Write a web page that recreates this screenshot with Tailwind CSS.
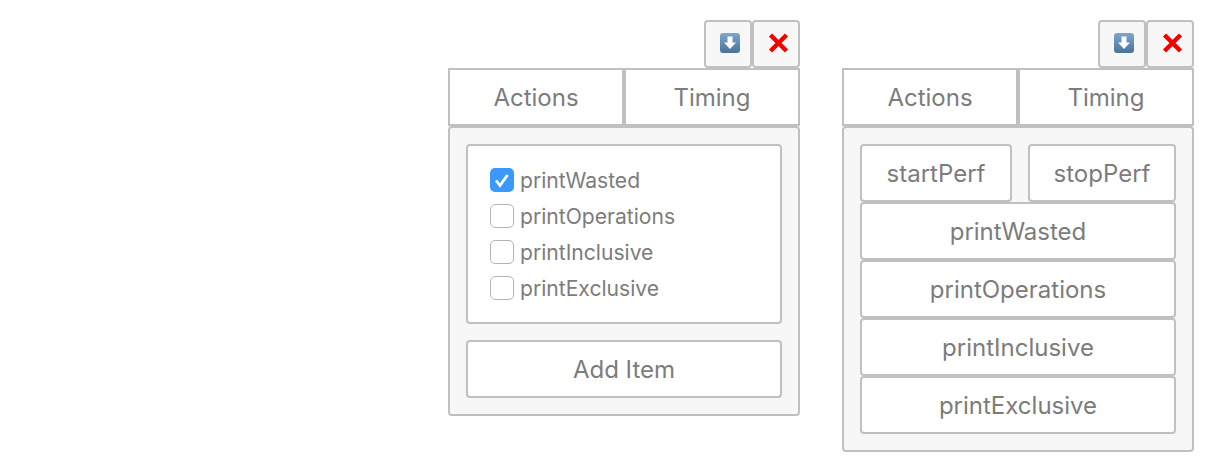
<!DOCTYPE html>
<html lang="en">
<head>
  <meta charset="UTF-8" />
  <title>Perf Panels</title>
  <script src="https://cdn.jsdelivr.net/npm/@tailwindcss/browser@4"></script>
</head>
<body class="bg-white font-['Inter',sans-serif] text-[#7c7c7c]">
  <div class="flex justify-end items-start gap-[42px] pt-5 pr-[22px]">

    <!-- actions panel -->
    <section class="w-[352px]">
      <div class="flex justify-end">
        <button class="w-12 h-12 pl-1 pb-[2px] flex items-center justify-center bg-[#f7f7f7] border-2 border-[#c0c0c0] rounded-[4px]">
          <svg width="20" height="20" viewBox="0 0 20 20"><defs><linearGradient id="a1" x1="0" y1="0" x2="0" y2="1"><stop offset="0" stop-color="#7fa6cb"/><stop offset="1" stop-color="#4a7299"/></linearGradient></defs><rect width="20" height="20" rx="3" fill="url(#a1)"/><path d="M7.500 3.500h5v6h3.500L10 16 4 9.500h3.500z" fill="#fff"/></svg>
        </button>
        <button class="w-12 h-12 pl-1 pb-[2px] flex items-center justify-center bg-[#f7f7f7] border-2 border-[#c0c0c0] rounded-[4px]">
          <svg width="21" height="20" viewBox="0 0 21 20"><path d="M2.500 2l16 16M18.500 2l-16 16" stroke="#f40000" stroke-width="4.500" fill="none"/></svg>
        </button>
      </div>
      <div class="flex">
        <button class="w-44 h-[58px] pt-[2px] bg-white border-2 border-[#c0c0c0] text-2xl">Actions</button>
        <button class="w-44 h-[58px] pt-[2px] bg-white border-2 border-[#c0c0c0] text-2xl">Timing</button>
      </div>
      <div class="bg-[#f7f7f7] border-2 border-[#c0c0c0] rounded-[4px] p-4">
        <div class="bg-white border-2 border-[#c0c0c0] rounded-[4px] py-4 px-[22px] mb-4 text-[21.100px]">
          <label class="flex items-center h-9 gap-[6px]">
            <span class="w-6 h-6 bg-[#3b99fc] rounded-[5px]">
              <svg width="24" height="24" viewBox="0 0 24 24"><path d="M6 12.500l4 5L17.500 7" stroke="#fff" stroke-width="2.800" fill="none"/></svg>
            </span>
            <span class="pt-[2px]">printWasted</span>
          </label>
          <label class="flex items-center h-9 gap-[6px]"><span class="w-6 h-6 bg-white border border-[#b4b4b4] rounded-[5px]"></span><span class="pt-[2px]">printOperations</span></label>
          <label class="flex items-center h-9 gap-[6px]"><span class="w-6 h-6 bg-white border border-[#b4b4b4] rounded-[5px]"></span><span class="pt-[2px]">printInclusive</span></label>
          <label class="flex items-center h-9 gap-[6px]"><span class="w-6 h-6 bg-white border border-[#b4b4b4] rounded-[5px]"></span><span class="pt-[2px]">printExclusive</span></label>
        </div>
        <button class="w-full h-[58px] pt-[2px] bg-white border-2 border-[#c0c0c0] rounded-[4px] text-2xl">Add Item</button>
      </div>
    </section>

    <!-- timing panel -->
    <section class="w-[352px]">
      <div class="flex justify-end">
        <button class="w-12 h-12 pl-1 pb-[2px] flex items-center justify-center bg-[#f7f7f7] border-2 border-[#c0c0c0] rounded-[4px]">
          <svg width="20" height="20" viewBox="0 0 20 20"><defs><linearGradient id="a2" x1="0" y1="0" x2="0" y2="1"><stop offset="0" stop-color="#7fa6cb"/><stop offset="1" stop-color="#4a7299"/></linearGradient></defs><rect width="20" height="20" rx="3" fill="url(#a2)"/><path d="M7.500 3.500h5v6h3.500L10 16 4 9.500h3.500z" fill="#fff"/></svg>
        </button>
        <button class="w-12 h-12 pl-1 pb-[2px] flex items-center justify-center bg-[#f7f7f7] border-2 border-[#c0c0c0] rounded-[4px]">
          <svg width="21" height="20" viewBox="0 0 21 20"><path d="M2.500 2l16 16M18.500 2l-16 16" stroke="#f40000" stroke-width="4.500" fill="none"/></svg>
        </button>
      </div>
      <div class="flex">
        <button class="w-44 h-[58px] pt-[2px] bg-white border-2 border-[#c0c0c0] text-2xl">Actions</button>
        <button class="w-44 h-[58px] pt-[2px] bg-white border-2 border-[#c0c0c0] text-2xl">Timing</button>
      </div>
      <div class="bg-[#f7f7f7] border-2 border-[#c0c0c0] rounded-[4px] p-4 text-2xl">
        <div class="flex gap-4">
          <button class="w-[152px] h-[58px] pt-[2px] bg-white border-2 border-[#c0c0c0] rounded-[4px]">startPerf</button>
          <button class="w-[148px] h-[58px] pt-[2px] bg-white border-2 border-[#c0c0c0] rounded-[4px]">stopPerf</button>
        </div>
        <button class="block w-full h-[58px] pt-[2px] bg-white border-2 border-[#c0c0c0] rounded-[4px]">printWasted</button>
        <button class="block w-full h-[58px] pt-[2px] bg-white border-2 border-[#c0c0c0] rounded-[4px]">printOperations</button>
        <button class="block w-full h-[58px] pt-[2px] bg-white border-2 border-[#c0c0c0] rounded-[4px]">printInclusive</button>
        <button class="block w-full h-[58px] pt-[2px] bg-white border-2 border-[#c0c0c0] rounded-[4px]">printExclusive</button>
      </div>
    </section>
  </div>
</body>
</html>
